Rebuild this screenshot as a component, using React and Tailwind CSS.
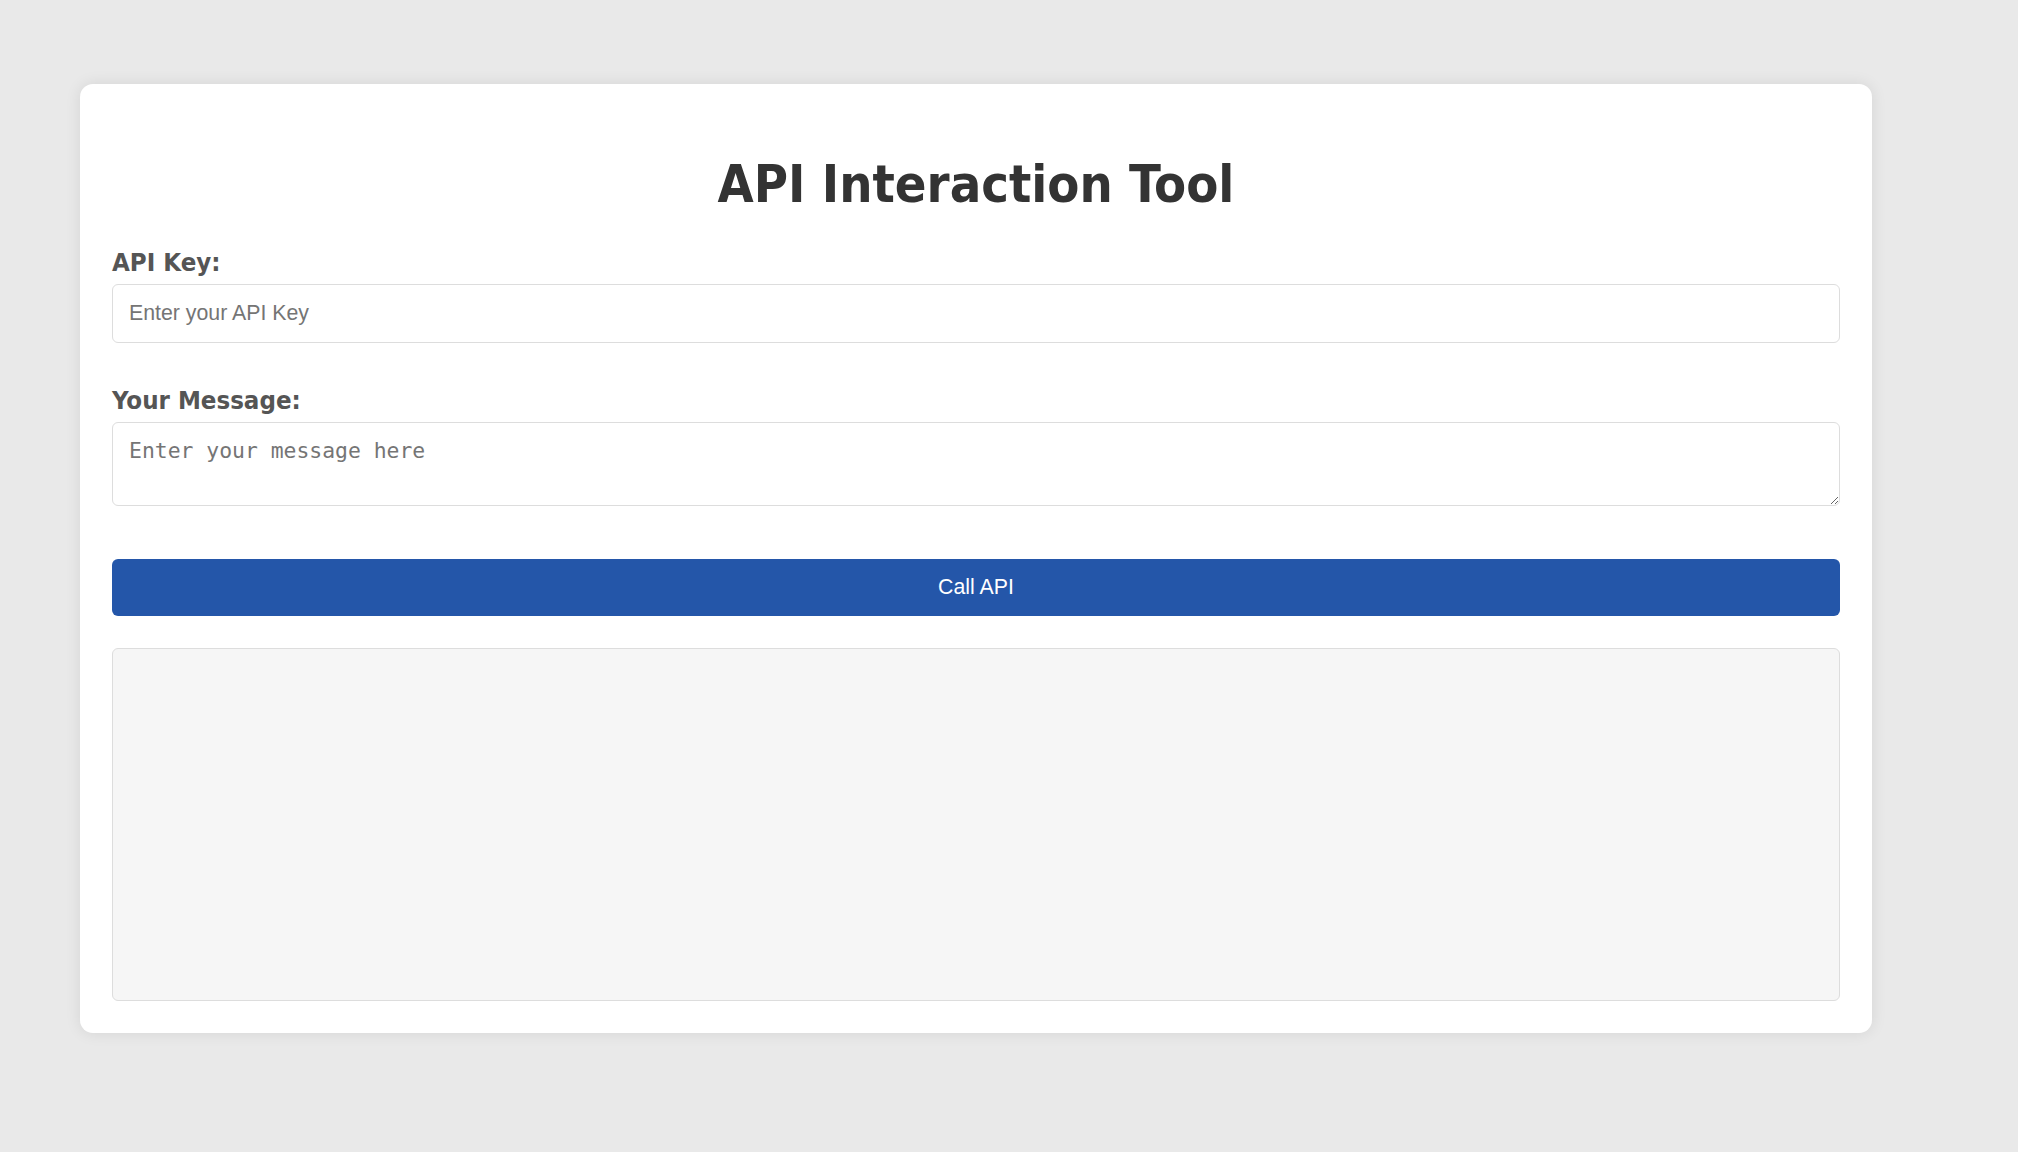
import React from "react";

const App = () => {
  return (
    <div className="min-h-[1152px] w-full bg-[#e9e9e9] pt-[84px] pl-[80px]">
      {/* card */}
      <div className="w-[1792px] rounded-[13px] bg-white p-[32px] shadow-[0_0_16px_rgba(0,0,0,0.09)]">
        <h1 className="mt-[39px] mb-[33px] text-center font-['DejaVu_Sans_Condensed','DejaVu_Sans',sans-serif] text-[52px] font-bold leading-[59px] text-[#333333]">
          API Interaction Tool
        </h1>

        {/* api key */}
        <label className="mb-[7px] block font-['DejaVu_Sans_Condensed','DejaVu_Sans',sans-serif] text-[25.6px] font-bold leading-[30px] text-[#555555]">
          API Key:
        </label>
        <input
          type="text"
          placeholder="Enter your API Key"
          className="block h-[59px] w-full rounded-[6px] border border-[#dddddd] px-[16px] font-['Liberation_Sans',Arial,sans-serif] text-[21.3px] text-[#333] outline-none placeholder:text-[#757575]"
        />

        {/* message */}
        <label className="mt-[42px] mb-[7px] block font-['DejaVu_Sans_Condensed','DejaVu_Sans',sans-serif] text-[25.6px] font-bold leading-[30px] text-[#555555]">
          Your Message:
        </label>
        <textarea
          placeholder="Enter your message here"
          className="block h-[84px] w-full rounded-[6px] border border-[#dddddd] px-[16px] pt-[15px] pb-[13px] font-['DejaVu_Sans_Mono',monospace] text-[21.4px] leading-[26px] text-[#333] outline-none placeholder:text-[#757575]"
        />

        <button className="mt-[53px] block h-[57px] w-full rounded-[6px] bg-[#2456a9] font-['Liberation_Sans',Arial,sans-serif] text-[21.3px] text-white">
          Call API
        </button>

        {/* output */}
        <div className="mt-[32px] h-[353px] w-full rounded-[6px] border border-[#dddddd] bg-[#f6f6f6]"></div>
      </div>
    </div>
  );
};

export default App;
